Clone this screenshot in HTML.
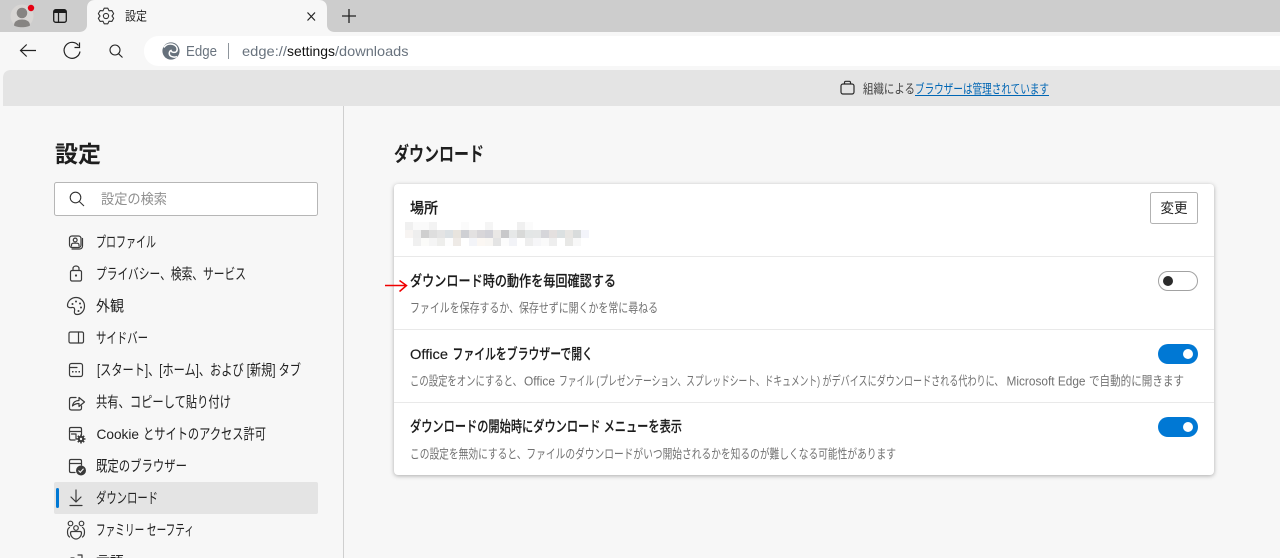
<!DOCTYPE html>
<html lang="ja">
<head>
<meta charset="utf-8">
<title>設定</title>
<style>
html,body{margin:0;padding:0;width:1280px;height:558px;overflow:hidden;background:#f7f7f7}
svg{display:block}
text{font-family:"Liberation Sans","Noto Sans CJK JP",sans-serif;white-space:pre}
.nav{font-size:15px;fill:#222}
.ttl{font-size:15px;font-weight:500;fill:#1a1a1a;stroke:#1a1a1a;stroke-width:.15px}
.sub{font-size:13px;fill:#727272}
.ic{fill:none;stroke:#3a3a3a;stroke-width:1.2;stroke-linecap:round;stroke-linejoin:round}
.mo rect{width:8px;height:8px;shape-rendering:crispEdges}
</style>
</head>
<body>
<svg width="1280" height="558" viewBox="0 0 1280 558" xmlns="http://www.w3.org/2000/svg">
<!-- tab strip -->
<rect width="1280" height="32" fill="#cdcdcd"/>
<path d="M79 32C84 32 87 29 87 25V8C87 3 90 0 95 0H319C324 0 327 3 327 8V25C327 29 330 32 335 32Z" fill="#f7f7f7"/>
<circle cx="22" cy="16" r="11.5" fill="#d8d6d4"/>
<circle cx="22" cy="13" r="5.300" fill="#868482"/>
<path d="M14 25.500C14 21 18 19.500 22 19.500S30 21 30 25.500C27 27.800 17 27.800 14 25.500Z" fill="#868482"/>
<circle cx="31" cy="8" r="3.200" fill="#e60012"/>
<rect x="53.700" y="9.700" width="12.600" height="12.600" rx="2" fill="none" stroke="#1c1c1c" stroke-width="1.300"/>
<rect x="54" y="10" width="12" height="3" fill="#1c1c1c"/>
<path d="M58.500 12V22" stroke="#1c1c1c" stroke-width="1.200"/>
<path d="M103 10.800L104.200 8.200H107.800L109 10.800L111.850 10.550L113.650 13.660L112 16L113.650 18.340L111.850 21.450L109 21.200L107.800 23.800H104.200L103 21.200L100.150 21.450L98.350 18.340L100 16L98.350 13.660L100.150 10.550Z" fill="none" stroke="#333" stroke-width="1.100" stroke-linejoin="round"/>
<circle cx="106" cy="16" r="2.600" fill="none" stroke="#333" stroke-width="1.100"/>
<text x="125" y="20.500" font-size="12.500" fill="#222" textLength="22" lengthAdjust="spacingAndGlyphs">設定</text>
<path d="M307.500 12.500L315 20.500M315 12.500L307.500 20.500" stroke="#222" stroke-width="1.200"/>
<path d="M342 16H356M349 9V23" stroke="#222" stroke-width="1.300"/>

<!-- toolbar -->
<rect y="32" width="1280" height="38" fill="#f7f7f7"/>
<path d="M20.500 50.500H36M26.700 44.500L20.500 50.500L26.700 56.500" fill="none" stroke="#222" stroke-width="1.200"/>
<path d="M78.500 45.500A8 8 0 1 0 80 51.500" fill="none" stroke="#222" stroke-width="1.200"/>
<path d="M79.500 42.500V47.500H74.500" fill="none" stroke="#222" stroke-width="1.200"/>
<circle cx="115" cy="50" r="5" fill="none" stroke="#222" stroke-width="1.100"/>
<path d="M118.600 53.800L122.500 57.500" stroke="#222" stroke-width="1.100"/>
<path d="M1280 36H159C150.500 36 144 42.500 144 51S150.500 66 159 66H1280Z" fill="#fff"/>
<circle cx="171" cy="51" r="8.600" fill="#66717c"/>
<path d="M164 47.500C166 44 171 43 174.500 45C177 46.500 178 49.500 176.500 51.500C175 53 171.500 52.500 171 50.500C169.500 51 168.500 53.500 170 55.500C171.500 57.200 175 57.500 177 56.500" fill="none" stroke="#fff" stroke-width="1.500"/>
<text x="186" y="56" font-size="14.500" fill="#69737e" textLength="31" lengthAdjust="spacingAndGlyphs">Edge</text>
<rect x="228" y="43" width="1" height="16" fill="#8e959c"/>
<text x="242" y="56" font-size="14" fill="#69737e" textLength="45" lengthAdjust="spacingAndGlyphs">edge://</text>
<text x="287" y="56" font-size="14" fill="#111" textLength="48" lengthAdjust="spacingAndGlyphs">settings</text>
<text x="335" y="56" font-size="14" fill="#69737e" textLength="73.500" lengthAdjust="spacingAndGlyphs">/downloads</text>

<!-- management banner -->
<path d="M3 106V78C3 73 6 70 11 70H1280V106Z" fill="#e4e4e4"/>
<rect x="841" y="84" width="13" height="10" rx="2" fill="none" stroke="#2a2a2a" stroke-width="1.200"/>
<path d="M844.500 84V82.500C844.500 81.700 845 81.300 845.800 81.300H849.200C850 81.300 850.500 81.700 850.500 82.500V84" fill="none" stroke="#2a2a2a" stroke-width="1.200"/>
<text x="863" y="93.300" font-size="13" fill="#444" textLength="52" lengthAdjust="spacingAndGlyphs">組織による</text>
<text x="915" y="93.300" font-size="13" fill="#0066b4" textLength="134" lengthAdjust="spacingAndGlyphs">ブラウザーは管理されています</text>
<rect x="915" y="95" width="134" height="1" fill="#0066b4"/>

<!-- sidebar -->
<rect x="343" y="106" width="1" height="452" fill="#cfcfcf"/>
<text x="55" y="162" font-size="23" font-weight="700" fill="#1f1f1f" textLength="46" lengthAdjust="spacingAndGlyphs">設定</text>
<rect x="54.500" y="182.500" width="263" height="33" rx="2" fill="#fff" stroke="#b6b6b6"/>
<circle cx="75.500" cy="197.500" r="5.300" fill="none" stroke="#333" stroke-width="1.100"/>
<path d="M79.300 201.500L84 206" stroke="#333" stroke-width="1.100"/>
<text x="101" y="204" font-size="14" fill="#8f8f8f" textLength="66" lengthAdjust="spacingAndGlyphs">設定の検索</text>

<rect x="54" y="482" width="264" height="32" rx="2" fill="#e4e4e4"/>
<rect x="56" y="488" width="3" height="20" rx="1.500" fill="#0078d4"/>

<text class="nav" x="96" y="247" textLength="60" lengthAdjust="spacingAndGlyphs">プロファイル</text>
<text class="nav" x="96" y="279" textLength="150" lengthAdjust="spacingAndGlyphs">プライバシー、検索、サービス</text>
<text class="nav" x="96" y="311" textLength="28" lengthAdjust="spacingAndGlyphs">外観</text>
<text class="nav" x="96" y="343" textLength="52" lengthAdjust="spacingAndGlyphs">サイドバー</text>
<text class="nav" x="97" y="375" textLength="204" lengthAdjust="spacingAndGlyphs">[スタート]、[ホーム]、および [新規] タブ</text>
<text class="nav" x="96" y="407" textLength="135" lengthAdjust="spacingAndGlyphs">共有、コピーして貼り付け</text>
<text class="nav" x="96.500" y="439" font-size="14" style="font-size:14px" textLength="42.500" lengthAdjust="spacingAndGlyphs">Cookie</text>
<text class="nav" x="143" y="439" textLength="123" lengthAdjust="spacingAndGlyphs">とサイトのアクセス許可</text>
<text class="nav" x="96" y="471" textLength="91" lengthAdjust="spacingAndGlyphs">既定のブラウザー</text>
<text class="nav" x="96" y="503" textLength="62" lengthAdjust="spacingAndGlyphs">ダウンロード</text>
<text class="nav" x="96" y="535" textLength="98" lengthAdjust="spacingAndGlyphs">ファミリー セーフティ</text>
<text class="nav" x="96" y="567" textLength="28" lengthAdjust="spacingAndGlyphs">言語</text>

<!-- nav icons -->
<g class="ic">
<rect x="69.500" y="236" width="11.500" height="11.500" rx="2.500"/>
<path d="M82.500 238.500V246C82.500 248 81 249 79.500 249H72"/>
<circle cx="75.200" cy="240" r="1.900"/>
<path d="M71.500 246V245C71.500 243.800 72.500 243.200 73.500 243.200H77C78 243.200 79 243.800 79 245V246"/>

<rect x="70.500" y="270.500" width="11" height="10.500" rx="1.500"/>
<path d="M73 270.500V268.500C73 267 74.300 266 76 266S79 267 79 268.500V270.500"/>

<path d="M76 297.500C71.500 297.500 67.500 301 67.500 305.500C67.500 307.500 70 308 72 307.500C74.500 307 75 309 74.500 311C74 313 75 314.500 77 314.500C81.500 314.500 84.500 310.500 84.500 306C84.500 301.500 81 297.500 76 297.500Z"/>

<rect x="69" y="332" width="14.500" height="11" rx="1.500"/>
<path d="M78.500 332V343"/>

<rect x="69.500" y="363.500" width="13" height="13" rx="2"/>
<path d="M69.500 367.500H77"/>

<path d="M76 397.500H71.500C70.300 397.500 69.500 398.300 69.500 399.500V408C69.500 409.200 70.300 410 71.500 410H79.500C80.700 410 81.500 409.200 81.500 408V406"/>
<path d="M72.500 406C73 402 76 400.500 79 400.500V397.500L84.500 402L79 406.500V403.500C76.500 403.500 74.500 404 72.500 406Z"/>

<path d="M75 440H71C70 440 69.500 439.500 69.500 438.500V429C69.500 428 70 427.500 71 427.500H80C81 427.500 81.500 428 81.500 429V435"/>
<path d="M69.500 431.500H81.500M71.500 434H76V439"/>

<path d="M75 472.500H71C70 472.500 69.500 472 69.500 471V461C69.500 460 70 459.500 71 459.500H80C81 459.500 81.500 460 81.500 461V465"/>
<path d="M69.500 463.500H81.500"/>

<path d="M76 490V502M71 497L76 502L81 497M70 505.500H82"/>

<circle cx="70.500" cy="523.500" r="2.300"/>
<circle cx="81.500" cy="523.500" r="2.300"/>
<circle cx="76" cy="528" r="2.300"/>
<path d="M72 531.500H80C81 531.500 81.500 532 81.500 533C81.500 536 79 539 76 539S70.500 536 70.500 533C70.500 532 71 531.500 72 531.500Z"/>
<path d="M69.500 537C68 536 67.500 534 67.500 532C67.500 529.500 68 528.200 69.500 527.500M82.500 537C84 536 84.500 534 84.500 532C84.500 529.500 84 528.200 82.500 527.500"/>

<path d="M78 555H82V558M74 558H71"/>
</g>
<g fill="#3a3a3a">
<circle cx="76" cy="275.500" r="1.100"/>
<circle cx="72.500" cy="304" r="1"/><circle cx="76" cy="301.500" r="1"/><circle cx="80" cy="303.500" r="1"/><circle cx="81" cy="307.500" r="1"/><circle cx="78.500" cy="311" r="1"/>
<rect x="72" y="371" width="1.500" height="1.500"/><rect x="75.300" y="371" width="1.500" height="1.500"/><rect x="78.500" y="371" width="1.500" height="1.500"/>
<circle cx="81" cy="439" r="3.200"/>
<circle cx="81" cy="470.500" r="5"/>
</g>
<path d="M81 434.500V443.500M76.500 439H85.500M77.800 435.800L84.200 442.200M84.200 435.800L77.800 442.200" stroke="#3a3a3a" stroke-width="1.600"/>
<circle cx="81" cy="439" r="1.200" fill="#f7f7f7"/>
<path d="M78.500 470.500L80.300 472.300L83.500 468.800" fill="none" stroke="#f7f7f7" stroke-width="1.100"/>

<!-- main content -->
<text x="394" y="161" font-size="20" font-weight="700" fill="#1f1f1f" textLength="90" lengthAdjust="spacingAndGlyphs">ダウンロード</text>
<rect x="394" y="184" width="820" height="291" rx="4" fill="#fff" style="filter:drop-shadow(0 1px 2px rgba(0,0,0,.3))"/>
<rect x="394" y="256" width="820" height="1" fill="#e9e9e9"/>
<rect x="394" y="329" width="820" height="1" fill="#e9e9e9"/>
<rect x="394" y="402" width="820" height="1" fill="#e9e9e9"/>

<text class="ttl" x="410" y="213" textLength="28" lengthAdjust="spacingAndGlyphs">場所</text>

<g class="mo">
<rect x="405" y="222" fill="#f0f0f0"/><rect x="413" y="222" fill="#fafafa"/><rect x="421" y="222" fill="#fafafa"/><rect x="429" y="222" fill="#f3f3f3"/><rect x="461" y="222" fill="#fbfbfb"/><rect x="485" y="222" fill="#f5f5f5"/><rect x="517" y="222" fill="#f0f0f0"/><rect x="525" y="222" fill="#fbfbfb"/>
<rect x="405" y="230" fill="#f7f4f2"/><rect x="413" y="230" fill="#eeeeee"/><rect x="421" y="230" fill="#cfcfcf"/><rect x="429" y="230" fill="#dedede"/><rect x="437" y="230" fill="#e4e4e4"/><rect x="445" y="230" fill="#dce1e4"/><rect x="453" y="230" fill="#e8e4de"/><rect x="461" y="230" fill="#cfd0d4"/><rect x="469" y="230" fill="#e3e1e1"/><rect x="477" y="230" fill="#d8d6d9"/><rect x="485" y="230" fill="#d2d2d8"/><rect x="493" y="230" fill="#eae8e6"/><rect x="501" y="230" fill="#c8c8ca"/><rect x="509" y="230" fill="#e6e8e8"/><rect x="517" y="230" fill="#d8d9d8"/><rect x="525" y="230" fill="#e3e6e6"/><rect x="533" y="230" fill="#e4e6e6"/><rect x="541" y="230" fill="#d6d6da"/><rect x="549" y="230" fill="#e4e0df"/><rect x="557" y="230" fill="#dbe0e1"/><rect x="565" y="230" fill="#e8e6e3"/><rect x="573" y="230" fill="#d9dcdc"/><rect x="581" y="230" fill="#f3f4fa"/>
<rect x="413" y="238" fill="#f0f0f0"/><rect x="421" y="238" fill="#fbfbf9"/><rect x="429" y="238" fill="#f5f5f5"/><rect x="437" y="238" fill="#eeeeec"/><rect x="445" y="238" fill="#fdfdfd"/><rect x="453" y="238" fill="#eeeae6"/><rect x="469" y="238" fill="#f3f4f8"/><rect x="477" y="238" fill="#fbf7f3"/><rect x="485" y="238" fill="#f8f6f3"/><rect x="493" y="238" fill="#e4e4e4"/><rect x="501" y="238" fill="#fcfcfc"/><rect x="509" y="238" fill="#f2f3f7"/><rect x="525" y="238" fill="#eeeeee"/><rect x="533" y="238" fill="#f6f6f8"/><rect x="541" y="238" fill="#fafafa"/><rect x="549" y="238" fill="#eeeeee"/><rect x="565" y="238" fill="#e8e8e6"/><rect x="573" y="238" fill="#f8f8f8"/>
</g>

<rect x="1150.500" y="192.500" width="47" height="31" rx="2" fill="#fff" stroke="#b2b2b2"/>
<text x="1160.500" y="213" font-size="14" fill="#222" textLength="27" lengthAdjust="spacingAndGlyphs">変更</text>

<text class="ttl" x="410" y="286" textLength="206" lengthAdjust="spacingAndGlyphs">ダウンロード時の動作を毎回確認する</text>
<text class="sub" x="410" y="312.500" textLength="248" lengthAdjust="spacingAndGlyphs">ファイルを保存するか、保存せずに開くかを常に尋ねる</text>
<path d="M385 285.500H406.500M399.500 280.500L406.500 285.500L399.500 291.500" fill="none" stroke="#f00000" stroke-width="1.500"/>
<rect x="1158.500" y="271.500" width="39" height="19" rx="9.500" fill="#fff" stroke="#a2a2a2"/>
<circle cx="1168" cy="281" r="5" fill="#2b2b2b"/>

<text class="ttl" x="410" y="359" style="font-size:14px" textLength="38" lengthAdjust="spacingAndGlyphs">Office</text>
<text class="ttl" x="452.500" y="359" textLength="140.500" lengthAdjust="spacingAndGlyphs">ファイルをブラウザーで開く</text>
<text class="sub" x="410" y="385.500" textLength="112" lengthAdjust="spacingAndGlyphs">この設定をオンにすると、</text>
<text class="sub" x="524" y="385.500" style="font-size:12.500px" textLength="31" lengthAdjust="spacingAndGlyphs">Office</text>
<text class="sub" x="559" y="385.500" textLength="261" lengthAdjust="spacingAndGlyphs">ファイル (プレゼンテーション、スプレッドシート、ドキュメント)</text>
<text class="sub" x="822.500" y="385.500" textLength="181" lengthAdjust="spacingAndGlyphs">がデバイスにダウンロードされる代わりに、</text>
<text class="sub" x="1006.500" y="385.500" style="font-size:12.500px" textLength="79" lengthAdjust="spacingAndGlyphs">Microsoft Edge</text>
<text class="sub" x="1089" y="385.500" textLength="95" lengthAdjust="spacingAndGlyphs">で自動的に開きます</text>
<rect x="1158" y="344" width="40" height="20" rx="10" fill="#0078d4"/>
<circle cx="1188" cy="354" r="5" fill="#fff"/>

<text class="ttl" x="410" y="431.500" textLength="272" lengthAdjust="spacingAndGlyphs">ダウンロードの開始時にダウンロード メニューを表示</text>
<text class="sub" x="410" y="458.500" textLength="486" lengthAdjust="spacingAndGlyphs">この設定を無効にすると、ファイルのダウンロードがいつ開始されるかを知るのが難しくなる可能性があります</text>
<rect x="1158" y="417" width="40" height="20" rx="10" fill="#0078d4"/>
<circle cx="1188" cy="427" r="5" fill="#fff"/>
</svg>
</body>
</html>
